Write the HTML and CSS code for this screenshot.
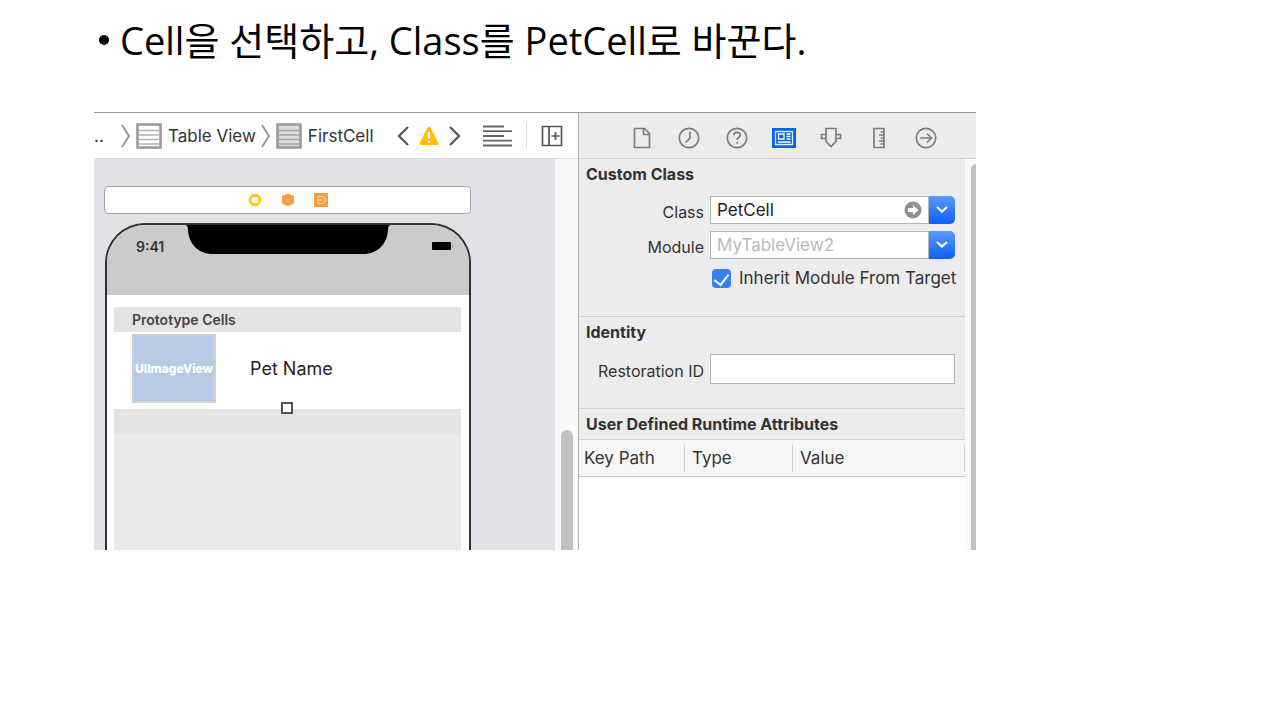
FILE: index.html
```
<!DOCTYPE html>
<html lang="ko">
<head>
    <meta charset="UTF-8">
    <meta name="viewport" content="width=device-width, initial-scale=1.0">
    <title>PetCell</title>
    <link rel="stylesheet" href="styles.css">
</head>
<body>
    <main class="slide">
        <ul class="points">
            <li>Cell을 선택하고, Class를 PetCell로 바꾼다.</li>
        </ul>

        <div class="xcode">
            <section class="editor">
                <nav class="jump-bar">
                    <span class="dots">..</span>
                    <svg class="crumb-sep" width="12" height="26" viewBox="0 0 12 26"><path d="M2 2l7 11-7 11" fill="none" stroke="#999" stroke-width="2"/></svg>
                    <a class="crumb" href="#table">
                        <svg width="26" height="26" viewBox="0 0 26 26"><rect x="1.5" y="1.5" width="23" height="23" fill="#fff" stroke="#98989b" stroke-width="2.5"/><path d="M3 7.5h20M3 12h20M3 16.5h20M3 21h20" stroke="#b4b4b6" stroke-width="1.5"/></svg>
                        Table View
                    </a>
                    <svg class="crumb-sep" width="12" height="26" viewBox="0 0 12 26"><path d="M2 2l7 11-7 11" fill="none" stroke="#999" stroke-width="2"/></svg>
                    <a class="crumb" href="#cell">
                        <svg width="26" height="26" viewBox="0 0 26 26"><rect x="1.5" y="1.5" width="23" height="23" fill="#dcdcde" stroke="#98989b" stroke-width="2.5"/><path d="M3 7.5h20M3 12h20M3 16.5h20M3 21h20" stroke="#a4a4a7" stroke-width="1.5"/></svg>
                        FirstCell
                    </a>
                    <div class="issues">
                        <button type="button" aria-label="Previous issue"><svg width="14" height="22" viewBox="0 0 14 22"><path d="M12 2L3 11l9 9" fill="none" stroke="#555" stroke-width="2.2"/></svg></button>
                        <button type="button" aria-label="Warnings"><svg width="20" height="20" viewBox="0 0 20 20"><path d="M10 2L18 17.5H2z" fill="#ffbe0b" stroke="#ffbe0b" stroke-width="3" stroke-linejoin="round"/><path d="M10 6v6.5M10 14.5v2.2" stroke="#fff" stroke-width="2.2"/></svg></button>
                        <button type="button" aria-label="Next issue"><svg width="14" height="22" viewBox="0 0 14 22"><path d="M2 2l9 9-9 9" fill="none" stroke="#555" stroke-width="2.2"/></svg></button>
                    </div>
                    <div class="tools">
                        <button type="button" aria-label="Editor options"><svg width="29" height="22" viewBox="0 0 29 22"><path d="M0 1.5h21M0 6.2h29M0 11h21M0 15.7h29M0 20.5h29" stroke="#666" stroke-width="1.8"/></svg></button>
                        <span class="tool-sep"></span>
                        <button type="button" aria-label="Add editor"><svg width="22" height="22" viewBox="0 0 22 22"><path d="M1.5 1.5h19v19h-19zM8 1.5v19M10.5 11h8M14.5 7v8" fill="none" stroke="#555" stroke-width="1.7"/></svg></button>
                    </div>
                </nav>

                <div class="canvas-area">
                    <div class="canvas">
                        <div class="dock">
                            <svg width="14" height="14" viewBox="0 0 14 14"><circle cx="7" cy="7" r="4.8" fill="#fff" stroke="#ffca28" stroke-width="3.2"/></svg>
                            <svg width="14" height="14" viewBox="0 0 14 14"><path d="M7 .5l6 2.5v7.5L7 13.5 1 10.5V3z" fill="#f6a03f"/><path d="M4 6l3 1.5L10 6M4 9h6" fill="none" stroke="#f8b466"/></svg>
                            <svg width="14" height="14" viewBox="0 0 14 14"><path d="M0 0h14v14H0z" fill="#f6a03f"/><path d="M4 3.5h3.500a3.500 3.500 0 010 7H4zM4 7h4" fill="none" stroke="#fbd09c" stroke-width="1.2"/></svg>
                        </div>

                        <div class="phone">
                            <div class="status-bar">
                                <span class="clock">9:41</span>
                                <svg class="notch" viewBox="0 0 204 29" preserveAspectRatio="none"><path d="M0 0h204q-2 1-2 5c-1 14-10 24-25 24H27C12 29 3 19 2 5q0-4-2-5z"/></svg>
                                <svg class="battery" width="24" height="10" viewBox="0 0 24 10"><rect x="1" y="1" width="19" height="8" rx="1"/><path d="M21 3.5q2 1.5 0 3z" fill="#888"/></svg>
                            </div>
                            <div class="table-view">
                                <div class="section-title">Prototype Cells</div>
                                <div class="cell">
                                    <div class="image-view">UIImageView</div>
                                    <span class="pet-name">Pet Name</span>
                                    <span class="handle"></span>
                                </div>
                                <div class="section-footer"></div>
                            </div>
                        </div>
                    </div>
                    <div class="gutter"><div class="thumb"></div></div>
                </div>
            </section>

            <aside class="inspector">
                <div class="tabs">
                    <button type="button" aria-label="File"><svg viewBox="0 0 24 24"><path d="M4.5 2.5h10l5 5v14h-15zM13.5 2.5v6h6" /></svg></button>
                    <button type="button" aria-label="History"><svg viewBox="0 0 24 24"><circle cx="12" cy="12" r="9.7"/><path d="M13 5.5V12l-4.5 4.5"/></svg></button>
                    <button type="button" aria-label="Quick help"><svg viewBox="0 0 24 24"><circle cx="12" cy="12" r="9.7"/><path d="M8.8 9.3c0-4 6.5-3.7 6.5-.3 0 2.3-3.2 2.2-3.2 5M12.1 15.8v2"/></svg></button>
                    <button type="button" aria-label="Identity"><svg viewBox="0 0 24 24"><path d="M0 2h24v20H0z" fill="#0a60ff" stroke="none"/><path d="M3.5 5.5h17v13h-17z" stroke="#dfeaff" stroke-width="1.3"/><path d="M6.5 8h5.5v5H6.5zM14.5 8h4M14.5 10.5h4M14.5 13h4M6 16h12.5" stroke="#fff" stroke-width="1.3"/></svg></button>
                    <button type="button" aria-label="Attributes"><svg viewBox="0 0 24 24"><path d="M7 2.5h10v13l-5 5-5-5zM7 8.500H2.5v4H7M17 8.5h4.5v4H17"/></svg></button>
                    <button type="button" aria-label="Size"><svg viewBox="0 0 24 24"><path d="M7 2.5h10v19H7zM17 6h-3.5M17 9h-5M17 12h-3.5M17 15h-5M17 18h-3.5"/></svg></button>
                    <button type="button" aria-label="Connections"><svg viewBox="0 0 24 24"><circle cx="12" cy="12" r="9.7"/><path d="M6 12h11.5M13 7.5l4.5 4.5-4.5 4.5"/></svg></button>
                </div>

                <div class="inspector-body">
                    <div class="sections">
                        <section class="group custom-class">
                            <h2>Custom Class</h2>
                            <div class="row">
                                <label for="class">Class</label>
                                <div class="combo">
                                    <input id="class" type="text" value="PetCell">
                                    <button class="go" type="button" aria-label="Go to class"><svg width="18" height="18" viewBox="0 0 18 18"><circle cx="9" cy="9" r="8.5" fill="#929292"/><path d="M4 7h5V4l5.5 5L9 14v-3H4z" fill="#fff"/></svg></button>
                                    <button class="drop" type="button" aria-label="Class list"><svg width="14" height="10" viewBox="0 0 14 10"><path d="M2 2l5 4.5L12 2" fill="none" stroke="#fff" stroke-width="2.2"/></svg></button>
                                </div>
                            </div>
                            <div class="row">
                                <label for="module">Module</label>
                                <div class="combo">
                                    <input id="module" type="text" placeholder="MyTableView2">
                                    <button class="drop" type="button" aria-label="Module list"><svg width="14" height="10" viewBox="0 0 14 10"><path d="M2 2l5 4.5L12 2" fill="none" stroke="#fff" stroke-width="2.2"/></svg></button>
                                </div>
                            </div>
                            <div class="check-row">
                                <input id="inherit" type="checkbox" checked>
                                <label for="inherit">Inherit Module From Target</label>
                            </div>
                        </section>

                        <section class="group identity">
                            <h2>Identity</h2>
                            <div class="row">
                                <label for="restoration">Restoration ID</label>
                                <input id="restoration" class="field" type="text">
                            </div>
                        </section>

                        <section class="group attributes">
                            <h2>User Defined Runtime Attributes</h2>
                            <table>
                                <thead>
                                    <tr>
                                        <th class="key"><span>Key Path</span></th>
                                        <th class="type"><span>Type</span></th>
                                        <th><span>Value</span></th>
                                    </tr>
                                </thead>
                                <tbody>
                                    <tr><td colspan="3"></td></tr>
                                </tbody>
                            </table>
                        </section>
                    </div>
                    <div class="side-scroll"><div class="side-thumb"></div></div>
                </div>
            </aside>
        </div>
    </main>
</body>
</html>
```
FILE: styles.css
```
* {
    box-sizing: border-box;
}

body {
    margin: 0;
    background: #fff;
    color: #000;
    font-family: Inter, "Liberation Sans", sans-serif;
    font-size: 17px;
}

button {
    display: flex;
    align-items: center;
    justify-content: center;
    padding: 0;
    border: none;
    background: none;
}

svg {
    display: block;
    flex-shrink: 0;
}

.slide {
    padding: 12px 304px 40px 94px;
}

.points {
    margin: 0 0 44px;
    padding: 0 0 0 5px;
    list-style: none;
    font-family: "Open Sans", "Noto Sans CJK KR", sans-serif;
    font-size: 38px;
    font-weight: 400;
    line-height: 56px;
    white-space: nowrap;
}

.points li {
    display: flex;
    align-items: center;
    gap: 11px;
}

.points li::before {
    content: "";
    width: 10px;
    height: 10px;
    border-radius: 50%;
    background: #000;
}

.xcode {
    display: grid;
    grid-template-columns: 484fr 398fr;
    border-top: 1px solid #999;
    color: #333;
    overflow: hidden;
}

/* editor side */
.editor {
    display: flex;
    flex-direction: column;
    min-width: 0;
}

.jump-bar {
    display: flex;
    align-items: center;
    height: 46px;
    padding-right: 15px;
    border-bottom: 1px solid #d8d8d8;
    background: #fff;
    white-space: nowrap;
}

.dots {
    width: 26px;
}

.crumb-sep {
    margin-right: 4px;
}

.crumb {
    display: flex;
    align-items: center;
    gap: 6px;
    margin-right: 4px;
    color: #333;
    text-decoration: none;
}

.issues {
    display: flex;
    align-items: center;
    gap: 9px;
    margin-left: 18px;
}

.tools {
    display: flex;
    align-items: center;
    gap: 14px;
    margin-left: auto;
}

.tool-sep {
    width: 1px;
    height: 25px;
    background: #ddd;
}

.canvas-area {
    display: flex;
    flex: 1;
}

.canvas {
    display: flex;
    flex: 1;
    flex-direction: column;
    gap: 9px;
    padding: 27px 84px 0 10px;
    background: #e1e2e7;
}

.dock {
    display: flex;
    align-items: center;
    justify-content: center;
    gap: 19px;
    height: 28px;
    border: 1px solid #a3a6a5;
    border-radius: 4px;
    background: #fff;
}

.phone {
    display: flex;
    flex: 1;
    flex-direction: column;
    margin-left: 1px;
    border: 2px solid #2f3133;
    border-bottom: none;
    border-radius: 40px 40px 0 0;
    background: #fff;
    overflow: hidden;
}

.status-bar {
    display: grid;
    grid-template-columns: 1fr 204px 1fr;
    align-items: start;
    height: 70px;
    background: #cbcbcb;
}

.clock {
    padding: 13px 0 0 29px;
    font-size: 14px;
    font-weight: 600;
    line-height: 18px;
}

.notch {
    width: 204px;
    height: 29px;
}

.battery {
    justify-self: end;
    margin: 16px 14px 0 0;
}

.table-view {
    display: flex;
    flex: 1;
    flex-direction: column;
    margin: 12px 8px 0 7px;
    background: #eaeaea;
}

.section-title,
.section-footer {
    height: 25px;
    background: #e4e4e4;
}

.section-title {
    padding-left: 18px;
    color: #444;
    font-size: 14px;
    font-weight: 600;
    line-height: 26px;
}

.cell {
    position: relative;
    display: flex;
    align-items: center;
    gap: 34px;
    height: 77px;
    padding: 0 18px 4px;
    background: #fff;
}

.image-view {
    display: flex;
    align-items: center;
    justify-content: center;
    width: 84px;
    height: 69px;
    border: 2px solid #ccd0d4;
    background: #b7cbe4;
    color: #fff;
    font-size: 12px;
    font-weight: 800;
}

.pet-name {
    color: #222;
    font-size: 18px;
}

/* resize handle sitting on the cell's bottom edge */
.handle {
    position: absolute;
    bottom: -5px;
    left: 50%;
    width: 12px;
    height: 12px;
    margin-left: -7px;
    border: 2px solid #555;
    background: #fff;
}

.gutter {
    display: flex;
    align-items: flex-end;
    width: 23px;
    padding-left: 6px;
    background: #fafafa;
}

.thumb {
    width: 12px;
    height: 120px;
    border-radius: 6px 6px 0 0;
    background: #c1c1c1;
}

/* inspector side */
.inspector {
    display: flex;
    flex-direction: column;
    min-width: 0;
    border-left: 1px solid #b0b0b0;
    background: #ececec;
}

.tabs {
    display: flex;
    align-items: center;
    justify-content: space-between;
    height: 46px;
    padding: 4px 38px 0 51px;
    border-bottom: 1px solid #d0d0d0;
}

.tabs svg {
    width: 24px;
    height: 24px;
    fill: none;
    stroke: #7d7d7d;
    stroke-width: 1.7;
}

.inspector-body {
    display: flex;
    flex: 1;
}

.sections {
    flex: 1;
    min-width: 0;
}

.group {
    border-bottom: 1px solid #d0d0d0;
}

.group h2 {
    margin: 0;
    padding-left: 7px;
    font-size: 16px;
    font-weight: 700;
    line-height: 30px;
}

.row {
    display: grid;
    grid-template-columns: 125px 1fr;
    gap: 6px;
    align-items: center;
    margin-top: 7px;
    padding-right: 10px;
}

.row label {
    padding-top: 4px;
    text-align: right;
    white-space: nowrap;
    font-size: 16px;
}

.combo {
    display: flex;
    height: 28px;
}

.combo input,
.field {
    width: 100%;
    min-width: 0;
    padding: 0 6px;
    border: 1px solid #b5b5b5;
    background: #fff;
    color: #222;
    font-family: inherit;
    font-size: 17px;
}

.combo input::placeholder {
    color: #bbb;
}

.go {
    width: 0;
}

.go svg {
    position: relative;
    right: 16px;
}

.drop {
    flex-shrink: 0;
    width: 26px;
    border-radius: 0 5px 5px 0;
    background: linear-gradient(#5a9bfb, #0a60ff);
}

.check-row {
    display: flex;
    align-items: center;
    gap: 8px;
    margin-top: 9px;
    padding-left: 133px;
    white-space: nowrap;
}

.check-row input {
    display: flex;
    justify-content: center;
    width: 19px;
    height: 19px;
    margin: 0;
    appearance: none;
    border-radius: 4px;
    background: #3880f8;
}

.check-row input:checked::after {
    content: "";
    width: 7px;
    height: 12px;
    margin-top: 2px;
    border: solid #fff;
    border-width: 0 2px 2px 0;
    transform: rotate(38deg);
}

.custom-class {
    padding-bottom: 28px;
}

.identity {
    padding-bottom: 24px;
}

.field {
    height: 30px;
}

.attributes {
    border-bottom: none;
}

table {
    width: 100%;
    border-spacing: 0;
    table-layout: fixed;
    border-top: 1px solid #d0d0d0;
}

th {
    height: 37px;
    padding: 0;
    border-bottom: 1px solid #c4c4c4;
    background: #f6f6f6;
    font-weight: 400;
    text-align: left;
}

th span {
    display: block;
    padding-left: 7px;
    border-right: 1px solid #d0d0d0;
    line-height: 27px;
}

.key {
    width: 106px;
}

.key span {
    padding-left: 5px;
}

.type {
    width: 108px;
}

td {
    height: 73px;
    padding: 0;
    background: #fff;
}

.side-scroll {
    width: 11px;
    padding: 5px 0 0 6px;
    background: #fafafa;
}

.side-thumb {
    height: 100%;
    border-radius: 6px 0 0 0;
    background: #c1c1c1;
}
```
